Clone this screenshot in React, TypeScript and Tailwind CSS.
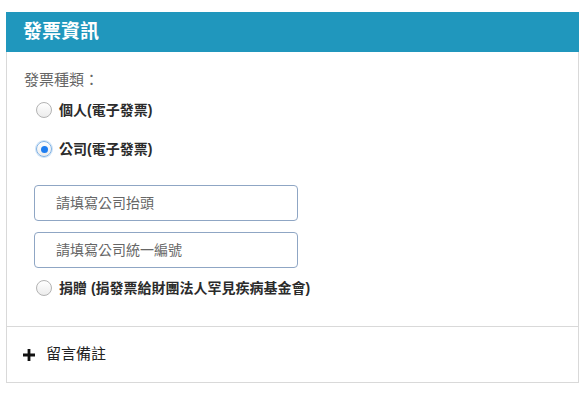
import { useState } from "react";

const cjk = "font-['Liberation_Sans','Noto_Sans_CJK_TC',sans-serif]";

function Radio({ checked, label, onSelect }: { checked: boolean; label: string; onSelect: () => void }) {
  return (
    <button type="button" onClick={onSelect} className="flex h-6 items-center gap-[7px] pl-[29px] text-left">
      <span
        className={`flex h-4 w-4 items-center justify-center rounded-full border bg-gradient-to-b from-white to-[#ececec] ${
          checked ? "border-[#7fb2e5] shadow-[0_0_0_1px_#cfe3f7]" : "border-[#b3b3b3]"
        }`}
      >
        {checked && <span className="h-[7px] w-[7px] rounded-full bg-[#1f7ef0]" />}
      </span>
      <span className="text-[14px] font-bold text-[#2b2b2b]">{label}</span>
    </button>
  );
}

export default function App() {
  const [type, setType] = useState("company");

  return (
    <div className={`min-h-screen bg-white px-[6px] pt-3 ${cjk}`}>
      <div className="w-[573px]">
        <div className="flex h-10 items-center bg-[#2097bd] pl-[17px] text-[19px] font-bold text-white">
          發票資訊
        </div>

        <div className="border-x border-b border-[#d9d9d9]">
          <div className="pb-[26px] pt-[17px]">
            <p className="pl-[17px] text-[15px] leading-[22px] text-[#666]">發票種類：</p>

            <div className="mt-[7px] flex flex-col gap-[15px]">
              <Radio checked={type === "personal"} label="個人(電子發票)" onSelect={() => setType("personal")} />
              <Radio checked={type === "company"} label="公司(電子發票)" onSelect={() => setType("company")} />
            </div>

            <div className="mt-[24px] flex flex-col gap-[11px] pl-[27px]">
              <input
                placeholder="請填寫公司抬頭"
                className="h-9 w-[264px] rounded-[4px] border border-[#8fa6c4] pl-[21px] text-[14px] text-[#333] outline-none placeholder:text-[#666]"
              />
              <input
                placeholder="請填寫公司統一編號"
                className="h-9 w-[264px] rounded-[4px] border border-[#8fa6c4] pl-[21px] text-[14px] text-[#333] outline-none placeholder:text-[#666]"
              />
            </div>

            <div className="mt-2">
              <Radio
                checked={type === "donate"}
                label="捐贈 (捐發票給財團法人罕見疾病基金會)"
                onSelect={() => setType("donate")}
              />
            </div>
          </div>

          <div className="flex h-14 items-center gap-[11px] border-t border-[#d9d9d9] pl-[16px]">
            <svg width="12" height="12" viewBox="0 0 12 12" className="text-[#111]">
              <path d="M4.6 0h2.8v4.6H12v2.8H7.4V12H4.6V7.4H0V4.6h4.6z" fill="currentColor" />
            </svg>
            <span className="text-[15px] text-[#222]">留言備註</span>
          </div>
        </div>
      </div>
    </div>
  );
}
